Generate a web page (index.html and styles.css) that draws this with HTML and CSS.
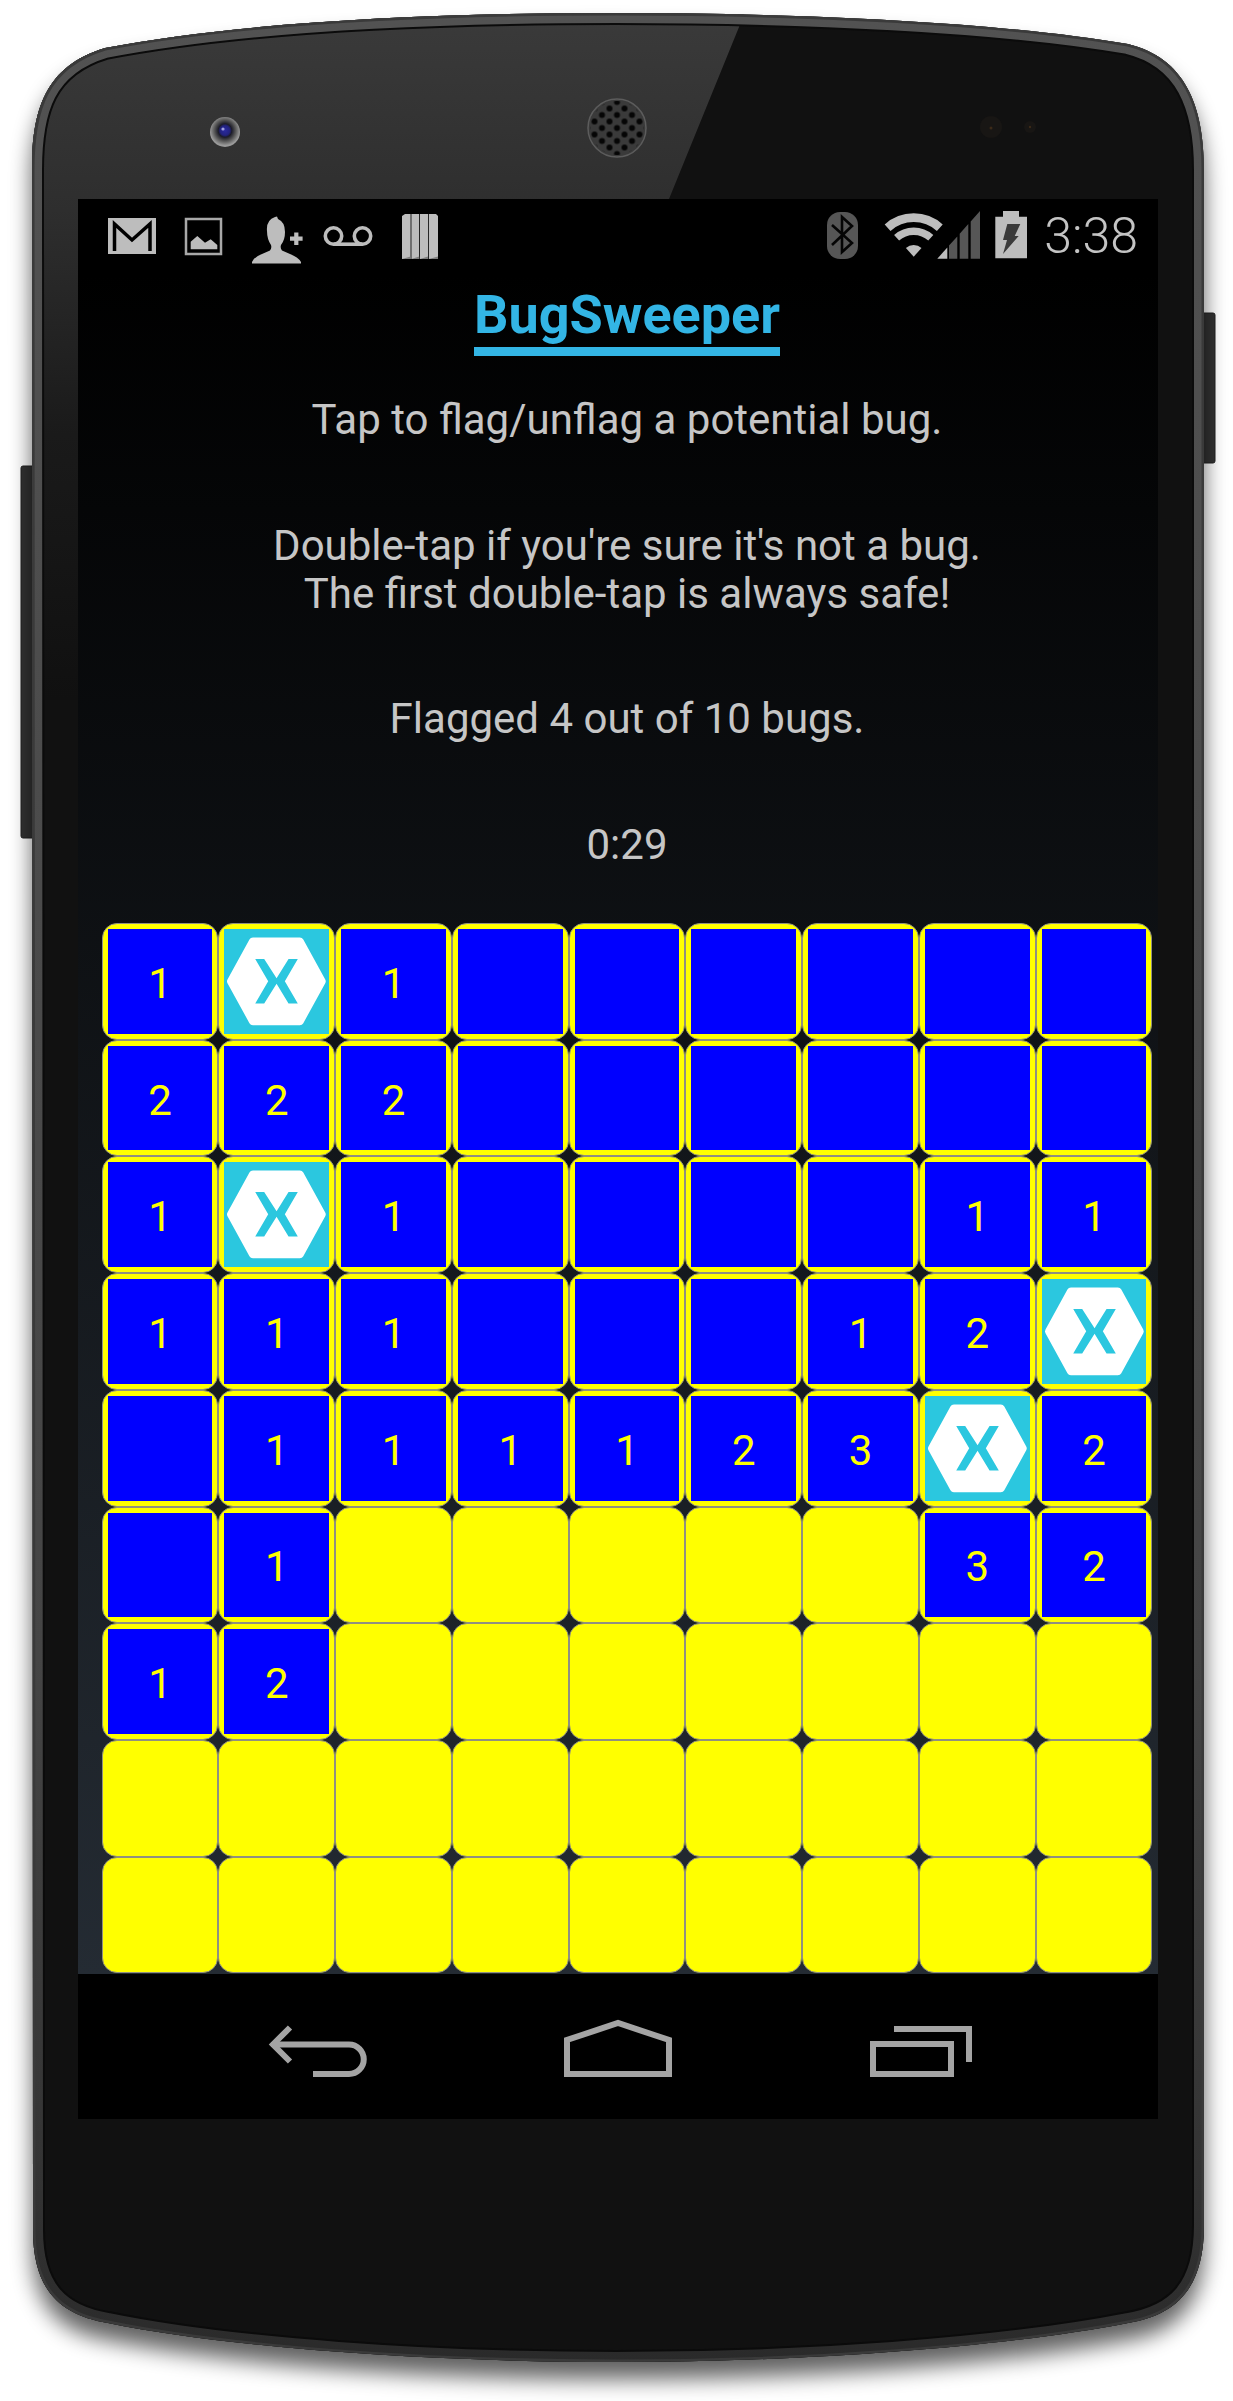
FILE: index.html
```html
<!DOCTYPE html>
<html lang="en">
<head>
<meta charset="utf-8">
<title>BugSweeper</title>
<link rel="stylesheet" href="styles.css">
</head>
<body>
<svg class="defs" width="0" height="0" aria-hidden="true">
  <defs>
    <symbol id="hex" viewBox="0 0 105 105">
      <polygon class="hex-body" points="7,52.5 29,12.5 76,12.5 98,52.5 76,92.5 29,92.5"/>
      <polygon class="hex-x" points="31.3,30 40.3,30 52.7,49.5 64.7,30 74,30 61,52.3 74,74.7 64.7,74.7 52.7,55 40.3,74.7 31.3,74.7 44.3,52.3"/>
    </symbol>
  </defs>
</svg>
<main class="phone">
  <svg class="body-art" viewBox="0 0 1233 2401" aria-hidden="true">
    <defs>
      <path id="shell" d="M32 170 C32 110 45 66 105 48 C240 22 430 13 616 13 C800 13 1000 22 1128 44 C1185 58 1204 105 1204 170 V2225 C1204 2290 1175 2315 1128 2323 C1000 2348 800 2362 616 2362 C430 2362 230 2348 108 2323 C60 2315 33 2290 33 2230 Z"/>
      <clipPath id="shell-clip"><use href="#shell"/></clipPath>
      <filter id="soft" x="-10%" y="-10%" width="120%" height="120%"><feGaussianBlur stdDeviation="11"/></filter>
      <linearGradient id="glare" x1="0" y1="0" x2="0" y2="1">
        <stop offset="0" stop-color="#3b3b3b"/>
        <stop offset=".3" stop-color="#2e2e2e"/>
        <stop offset=".62" stop-color="#1a1a1a"/>
        <stop offset="1" stop-color="#101010"/>
      </linearGradient>
      <linearGradient id="rim" x1="0" y1="0" x2="0" y2="1">
        <stop offset="0" stop-color="#525252"/>
        <stop offset=".7" stop-color="#454545"/>
        <stop offset=".93" stop-color="#333"/>
        <stop offset="1" stop-color="#2a2a2a"/>
      </linearGradient>
      <radialGradient id="lens" cx=".5" cy=".45" r=".5">
        <stop offset="0" stop-color="#2a2aa0"/>
        <stop offset=".32" stop-color="#222280"/>
        <stop offset=".45" stop-color="#1c1c28"/>
        <stop offset=".7" stop-color="#555"/>
        <stop offset="1" stop-color="#9a9a9a"/>
      </radialGradient>
      <pattern id="holes" width="15" height="13" patternUnits="userSpaceOnUse" x="609.5" y="121.5">
        <circle cx="7.5" cy="6.5" r="3" fill="#050505"/>
        <circle cx="0" cy="0" r="3" fill="#050505"/>
        <circle cx="15" cy="0" r="3" fill="#050505"/>
        <circle cx="0" cy="13" r="3" fill="#050505"/>
        <circle cx="15" cy="13" r="3" fill="#050505"/>
      </pattern>
    </defs>
    <rect class="art-button" x="21" y="466" width="14" height="372" rx="2"/>
    <rect class="art-button" x="1201" y="313" width="14" height="150" rx="2"/>
    <use href="#shell" class="art-shadow" filter="url(#soft)" transform="translate(0 17)"/>
    <g clip-path="url(#shell-clip)">
      <use href="#shell" class="art-face"/>
      <polygon points="0,0 750,0 669,199 669,700 0,700" fill="url(#glare)"/>
      <use href="#shell" class="art-line-dark"/>
      <use href="#shell" class="art-rim"/>
      <use href="#shell" class="art-rim-light"/>
    </g>
    <circle cx="225" cy="132" r="15" fill="url(#lens)"/>
    <circle cx="223" cy="129" r="1.6" fill="#a0a0e0"/>
    <circle cx="617" cy="128" r="29" fill="#3a3a3a" stroke="#5c5c5c" stroke-width="1.5"/>
    <circle cx="617" cy="128" r="27" fill="url(#holes)"/>
    <circle cx="991" cy="127" r="11" fill="#181614"/>
    <circle cx="991" cy="128" r="1.5" fill="#3c2a18"/>
    <circle cx="1030" cy="127" r="6" fill="#181614"/>
    <circle cx="1030" cy="127" r="1.2" fill="#3c2a18"/>
  </svg>

  <section class="screen">
    <header class="status">
      <div class="status-group">
        <svg class="slot" viewBox="0 0 72 75"><rect class="ic" x="12" y="19" width="48" height="36"/><path class="ic-cut" d="M18.5 52V25L36 41L54 25V52"/></svg>
        <svg class="slot" viewBox="0 0 72 75"><rect class="ic-frame" x="18" y="20" width="35" height="35"/><path class="ic" d="M22.7 50.3V42.7L29.3 37L37 43.7L42.7 40.3L49.3 46V50.3Z"/></svg>
        <svg class="slot" viewBox="0 0 72 75"><path class="ic" d="M12 64.5V63Q14 58 22 55L30 51.5Q32 49 31 46Q27 40 27 32Q26 21 35 18L37 17.5L38 20Q45 23 45 33Q45 41 41 46Q40 49 42 51.5L50 55Q58 58 61 63V64.5Z"/><path class="ic" d="M54.2 33.4H58.4V37.6H62.6V41.8H58.4V46H54.2V41.8H50V37.6H54.2Z"/></svg>
        <svg class="slot" viewBox="0 0 72 75"><circle class="ic-line" cx="21.5" cy="37" r="8.2"/><circle class="ic-line" cx="50.5" cy="37" r="8.2"/><path class="ic-line" d="M21.5 45.2H50.5"/></svg>
        <svg class="slot" viewBox="0 0 72 75"><path class="ic" d="M18 60V17L21 15H26.6V60ZM27.4 60V15H35.2V60ZM36 60V15H44V60ZM44.8 60V15H52L54 17V60Z"/><path class="ic-dim" d="M18 60L26.6 57.5V60ZM27.4 60L35.2 57.5V60ZM36 60L44 57.5V60ZM44.8 60L54 57.5V60Z"/></svg>
      </div>
      <div class="status-group">
        <svg class="slot" viewBox="0 0 72 75"><rect class="ic-pill" x="20" y="13" width="31" height="47" rx="13"/><path class="ic-rune" d="M25 26L45 44L35 53V18L45 27L25 46"/></svg>
        <svg class="slot-wide" viewBox="0 0 102 75"><path class="ic-arc-a" d="M8.6 28.7A39 39 0 0 1 60.8 28.7"/><path class="ic-arc-b" d="M17.6 38.8A25.5 25.5 0 0 1 51.8 38.8"/><path class="ic" d="M34.7 57.7L26.9 49A11.7 11.7 0 0 1 42.5 49Z"/><path class="ic" d="M58.3 59.7H68.3V48.5Z"/><path class="ic-bar" d="M70 59.7V46.6L78.3 37.4V59.7ZM80.7 59.7V34.7L89.3 25.1V59.7ZM91.7 59.7V22.4L101 12V59.7Z"/></svg>
        <svg class="slot-batt" viewBox="0 0 60 75"><path class="ic" d="M14.3 17.7H22V12H38V17.7H46V59.3H14.3Z"/><path class="ic-bolt" d="M26.3 25H39.3L33.7 37H37.7L22 55L26 41H22Z"/></svg>
        <span class="clock">3:38</span>
      </div>
    </header>

    <div class="app">
      <h1 class="title"><span class="title-text">BugSweeper</span></h1>
      <p class="line line-first">Tap to flag/unflag a potential bug.</p>
      <p class="line">Double-tap if you're sure it's not a bug.<br>The first double-tap is always safe!</p>
      <p class="line">Flagged 4 out of 10 bugs.</p>
      <p class="line">0:29</p>

      <div class="board">
        <div class="cell open"><span class="inner">1</span></div>
        <div class="cell open"><span class="inner flag"><svg class="hex"><use href="#hex"/></svg></span></div>
        <div class="cell open"><span class="inner">1</span></div>
        <div class="cell open"><span class="inner"></span></div>
        <div class="cell open"><span class="inner"></span></div>
        <div class="cell open"><span class="inner"></span></div>
        <div class="cell open"><span class="inner"></span></div>
        <div class="cell open"><span class="inner"></span></div>
        <div class="cell open"><span class="inner"></span></div>

        <div class="cell open"><span class="inner">2</span></div>
        <div class="cell open"><span class="inner">2</span></div>
        <div class="cell open"><span class="inner">2</span></div>
        <div class="cell open"><span class="inner"></span></div>
        <div class="cell open"><span class="inner"></span></div>
        <div class="cell open"><span class="inner"></span></div>
        <div class="cell open"><span class="inner"></span></div>
        <div class="cell open"><span class="inner"></span></div>
        <div class="cell open"><span class="inner"></span></div>

        <div class="cell open"><span class="inner">1</span></div>
        <div class="cell open"><span class="inner flag"><svg class="hex"><use href="#hex"/></svg></span></div>
        <div class="cell open"><span class="inner">1</span></div>
        <div class="cell open"><span class="inner"></span></div>
        <div class="cell open"><span class="inner"></span></div>
        <div class="cell open"><span class="inner"></span></div>
        <div class="cell open"><span class="inner"></span></div>
        <div class="cell open"><span class="inner">1</span></div>
        <div class="cell open"><span class="inner">1</span></div>

        <div class="cell open"><span class="inner">1</span></div>
        <div class="cell open"><span class="inner">1</span></div>
        <div class="cell open"><span class="inner">1</span></div>
        <div class="cell open"><span class="inner"></span></div>
        <div class="cell open"><span class="inner"></span></div>
        <div class="cell open"><span class="inner"></span></div>
        <div class="cell open"><span class="inner">1</span></div>
        <div class="cell open"><span class="inner">2</span></div>
        <div class="cell open"><span class="inner flag"><svg class="hex"><use href="#hex"/></svg></span></div>

        <div class="cell open"><span class="inner"></span></div>
        <div class="cell open"><span class="inner">1</span></div>
        <div class="cell open"><span class="inner">1</span></div>
        <div class="cell open"><span class="inner">1</span></div>
        <div class="cell open"><span class="inner">1</span></div>
        <div class="cell open"><span class="inner">2</span></div>
        <div class="cell open"><span class="inner">3</span></div>
        <div class="cell open"><span class="inner flag"><svg class="hex"><use href="#hex"/></svg></span></div>
        <div class="cell open"><span class="inner">2</span></div>

        <div class="cell open"><span class="inner"></span></div>
        <div class="cell open"><span class="inner">1</span></div>
        <div class="cell"></div>
        <div class="cell"></div>
        <div class="cell"></div>
        <div class="cell"></div>
        <div class="cell"></div>
        <div class="cell open"><span class="inner">3</span></div>
        <div class="cell open"><span class="inner">2</span></div>

        <div class="cell open"><span class="inner">1</span></div>
        <div class="cell open"><span class="inner">2</span></div>
        <div class="cell"></div>
        <div class="cell"></div>
        <div class="cell"></div>
        <div class="cell"></div>
        <div class="cell"></div>
        <div class="cell"></div>
        <div class="cell"></div>

        <div class="cell"></div>
        <div class="cell"></div>
        <div class="cell"></div>
        <div class="cell"></div>
        <div class="cell"></div>
        <div class="cell"></div>
        <div class="cell"></div>
        <div class="cell"></div>
        <div class="cell"></div>

        <div class="cell"></div>
        <div class="cell"></div>
        <div class="cell"></div>
        <div class="cell"></div>
        <div class="cell"></div>
        <div class="cell"></div>
        <div class="cell"></div>
        <div class="cell"></div>
        <div class="cell"></div>
      </div>
    </div>

    <nav class="nav">
      <svg class="nav-btn" viewBox="264 2019 108 64"><path class="nav-line" d="M290 2027.5L273 2044.5L290 2061.5"/><path class="nav-line" d="M276 2044.5H349A14.7 14.7 0 0 1 349 2074H313"/></svg>
      <svg class="nav-btn" viewBox="564 2019 108 64"><path class="nav-line" d="M567 2074V2040L618 2023L669 2040V2074Z"/></svg>
      <svg class="nav-btn" viewBox="864 2019 108 64"><rect class="nav-line" x="873" y="2044" width="78" height="30"/><path class="nav-line" d="M894 2029H969V2062"/></svg>
    </nav>
  </section>
</main>
</body>
</html>
```
FILE: styles.css
```css
* { box-sizing: border-box; }

html, body {
  margin: 0;
  background: #fff;
}

.defs { position: absolute; }

.phone {
  position: relative;
  width: 1233px;
  height: 2401px;
  padding: 199px 75px 282px 78px;
  overflow: hidden;
  font-family: Roboto, "Liberation Sans", sans-serif;
}

.body-art {
  position: absolute;
  inset: 0;
  width: 1233px;
  height: 2401px;
}

.art-button { fill: #333; stroke: #222; stroke-width: 1; }
.art-shadow { fill: #000; opacity: .62; }
.art-face { fill: #111; }
.art-line-dark { fill: none; stroke: #0b0b0b; stroke-width: 24; }
.art-rim { fill: none; stroke: url(#rim); stroke-width: 20; }
.art-rim-light { fill: none; stroke: #3a3a3a; stroke-width: 5; }

.screen {
  position: relative;
  display: flex;
  flex-direction: column;
  width: 1080px;
  height: 1920px;
  background: #000;
}

/* status bar */
.status {
  display: flex;
  justify-content: space-between;
  align-items: center;
  flex: none;
  height: 75px;
  padding: 0 20px 0 18px;
  background: #000;
}

.status-group { display: flex; align-items: center; }

.slot { width: 72px; height: 75px; flex: none; }
.slot-wide { width: 102px; height: 75px; flex: none; }
.slot-batt { width: 60px; height: 75px; flex: none; }

.ic { fill: #bdbdbd; }
.ic-dim { fill: #7d7d7d; }
.ic-cut { fill: none; stroke: #000; stroke-width: 3.5; }
.ic-frame { fill: #000; stroke: #a8a8a8; stroke-width: 2.5; }
.ic-line { fill: none; stroke: #bdbdbd; stroke-width: 3.6; }
.ic-pill { fill: #565656; }
.ic-rune { fill: none; stroke: #050505; stroke-width: 2.6; }
.ic-arc-a { fill: none; stroke: #bdbdbd; stroke-width: 8.7; }
.ic-arc-b { fill: none; stroke: #bdbdbd; stroke-width: 7.5; }
.ic-bar { fill: #565656; }
.ic-bolt { fill: #3a3a3a; }

.clock {
  margin-left: 3px;
  color: #c4c4c4;
  font-size: 50px;
  font-weight: 300;
  line-height: 75px;
}

/* app area */
.app {
  flex: 1;
  min-height: 0;
  overflow: hidden;
  padding: 0 5.7px 0 23.7px;
  text-align: center;
  background: linear-gradient(#000 0, #242b33 100%);
}

.title {
  margin: 0;
  height: 82px;
  font-size: 54px;
  font-weight: 700;
  line-height: 63px;
  color: #33b5e5;
}

.title-text {
  display: inline-block;
  height: 82px;
  padding-top: 9px;
  border-bottom: 9px solid #33b5e5;
}

.line {
  margin: 77.5px 0 0;
  color: #c6c6c6;
  font-size: 42px;
  line-height: 48px;
}

.line-first { margin-top: 40px; }

.board {
  display: grid;
  grid-template-columns: repeat(9, 1fr);
  grid-auto-rows: 116.73px;
  margin-top: 54.5px;
}

.cell {
  display: flex;
  min-width: 0;
  padding: 5px;
  background: #ff0;
  border: 1px solid #909080;
  border-radius: 15px;
}

.inner {
  display: flex;
  flex: 1;
  align-items: center;
  justify-content: center;
  padding-top: 4px;
  background: #00f;
  color: #ff0;
  font-size: 42px;
}

.flag { padding-top: 0; background: #2bc7df; }

.hex { width: 100%; height: 100%; display: block; }
.hex-body { fill: #fff; stroke: #fff; stroke-width: 8; stroke-linejoin: round; }
.hex-x { fill: #2bc7df; }

/* nav bar */
.nav {
  display: flex;
  justify-content: center;
  align-items: flex-start;
  gap: 192px;
  flex: none;
  height: 145px;
  padding-top: 45px;
  background: #000;
}

.nav-btn { width: 108px; height: 64px; flex: none; }
.nav-line { fill: none; stroke: #a4a4a4; stroke-width: 6; }
```
